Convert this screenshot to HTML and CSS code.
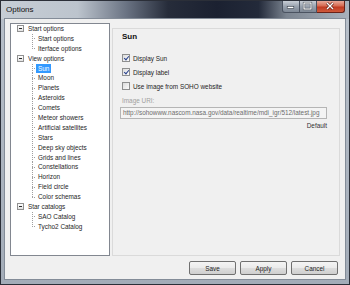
FILE: index.html
```html
<!DOCTYPE html>
<html lang="en">
<head>
  <meta charset="UTF-8">
  <title>Options</title>
  <link rel="stylesheet" href="styles.css">
</head>
<body>
  <div class="window">
    <div class="titlebar">
      <span class="title">Options</span>
      <div class="caption-buttons">
        <span class="cap cap-min">
          <svg width="18" height="12" viewBox="0 0 18 12"><rect x="5.5" y="6.5" width="7" height="2" fill="#fff" stroke="#333a44" stroke-width="0.6"/></svg>
        </span>
        <span class="cap cap-max">
          <svg width="17" height="12" viewBox="0 0 17 12"><rect x="5" y="3" width="7" height="6" fill="none" stroke="#333a44" stroke-width="2.2"/><rect x="5" y="3" width="7" height="6" fill="none" stroke="#fff" stroke-width="1.2"/></svg>
        </span>
        <span class="cap cap-close">
          <svg width="28" height="12" viewBox="0 0 28 12"><path d="M11 3l6 6M17 3l-6 6" stroke="#5a1a12" stroke-width="2.6"/><path d="M11 3l6 6M17 3l-6 6" stroke="#fff" stroke-width="1.4"/></svg>
        </span>
      </div>
    </div>

    <div class="client">
      <div class="main">
        <div class="tree">
          <div class="root-row"><span class="expander"></span><span class="label">Start options</span></div>
          <div class="child"><span class="guide"></span><span class="label">Start options</span></div>
          <div class="child last"><span class="guide"></span><span class="label">Iterface options</span></div>

          <div class="root-row"><span class="expander"></span><span class="label">View options</span></div>
          <div class="child"><span class="guide"></span><span class="label selected">Sun</span></div>
          <div class="child"><span class="guide"></span><span class="label">Moon</span></div>
          <div class="child"><span class="guide"></span><span class="label">Planets</span></div>
          <div class="child"><span class="guide"></span><span class="label">Asteroids</span></div>
          <div class="child"><span class="guide"></span><span class="label">Comets</span></div>
          <div class="child"><span class="guide"></span><span class="label">Meteor showers</span></div>
          <div class="child"><span class="guide"></span><span class="label">Artificial satellites</span></div>
          <div class="child"><span class="guide"></span><span class="label">Stars</span></div>
          <div class="child"><span class="guide"></span><span class="label">Deep sky objects</span></div>
          <div class="child"><span class="guide"></span><span class="label">Grids and lines</span></div>
          <div class="child"><span class="guide"></span><span class="label">Constellations</span></div>
          <div class="child"><span class="guide"></span><span class="label">Horizon</span></div>
          <div class="child"><span class="guide"></span><span class="label">Field circle</span></div>
          <div class="child last"><span class="guide"></span><span class="label">Color schemas</span></div>

          <div class="root-row"><span class="expander"></span><span class="label">Star catalogs</span></div>
          <div class="child"><span class="guide"></span><span class="label">SAO Catalog</span></div>
          <div class="child last"><span class="guide"></span><span class="label">Tycho2 Catalog</span></div>
        </div>

        <div class="panel">
          <h2 class="panel-title">Sun</h2>
          <label class="check-row first">
            <span class="checkbox checked"></span>
            <span>Display Sun</span>
          </label>
          <label class="check-row">
            <span class="checkbox checked"></span>
            <span>Display label</span>
          </label>
          <label class="check-row">
            <span class="checkbox"></span>
            <span>Use image from SOHO website</span>
          </label>
          <div class="field-label">Image URI:</div>
          <div class="textbox">http://sohowww.nascom.nasa.gov/data/realtime/mdi_igr/512/latest.jpg</div>
          <div class="default-link">Default</div>
        </div>
      </div>

      <div class="buttons">
        <button class="btn">Save</button>
        <button class="btn">Apply</button>
        <button class="btn">Cancel</button>
      </div>
    </div>
  </div>
</body>
</html>
```

FILE: styles.css
```css
body {
    margin: 0;
    padding: 0;
    font-family: 'Liberation Sans', Arial, sans-serif;
    font-size: 6.4px;
    color: #1e1e1e;
    background: #2a2e36;
}

.window {
    width: 350px;
    height: 285px;
    box-sizing: border-box;
    border: 1px solid #2b2f38;
    padding: 0 4px 5px 4px;
    display: flex;
    flex-direction: column;
    background: linear-gradient(to bottom, #b8c0ca, #a3acb8);
}

/* title bar */

.titlebar {
    height: 18px;
    display: flex;
    align-items: flex-start;
    margin: 0 -4px;
    padding: 0 4px;
    background: linear-gradient(to right, #c6cdd5 0, #bcc4cd 22%, #6a7383 36%, #262c3a 48%, #1b2131 62%, #232a3a 74%, #7b8490 82%, #a9b2bd 100%);
}

.title {
    font-size: 8px;
    line-height: 18px;
    color: #111;
    padding-left: 1px;
}

.caption-buttons {
    margin-left: auto;
    display: flex;
}

.cap {
    height: 12px;
    display: flex;
    border: 1px solid #4b5361;
    border-top: none;
    box-sizing: border-box;
    overflow: hidden;
}

.cap svg {
    display: block;
    margin: -1px 0 0 -1px;
}

.cap-min {
    width: 18px;
    border-radius: 0 0 0 3px;
    background: linear-gradient(to bottom, #c8ced6, #99a2ae 50%, #7d8795);
}

.cap-max {
    width: 17px;
    border-left: none;
    background: linear-gradient(to bottom, #c8ced6, #99a2ae 50%, #7d8795);
}

.cap-close {
    width: 28px;
    border-left: none;
    border-color: #6b2218;
    border-radius: 0 0 3px 0;
    background: linear-gradient(to bottom, #e8a899, #d56a52 45%, #c03a22 55%, #cf5a3c);
}

/* client area */

.client {
    flex: 1;
    background-color: #f0f0f0;
    box-shadow: 0 0 0 1px #838c98;
    padding: 4px 5px 4px 5px;
    display: flex;
    flex-direction: column;
}

.main {
    height: 233px;
    display: flex;
    gap: 2px;
}

/* tree */

.tree {
    width: 100px;
    box-sizing: border-box;
    border: 1px solid #828790;
    background: white;
    line-height: 9.9px;
}

.root-row,
.child {
    display: flex;
    align-items: center;
    height: 9.9px;
    white-space: nowrap;
}

.root-row {
    padding-left: 6px;
}

.child {
    padding-left: 21px;
    align-items: stretch;
}

.expander {
    width: 7px;
    height: 7px;
    box-sizing: border-box;
    border: 1px solid #919191;
    background: linear-gradient(to bottom, #ffffff, #e2e2e2);
    margin-right: 2px;
    display: flex;
    align-items: center;
    justify-content: center;
}

.expander::after {
    content: "";
    width: 3px;
    height: 1px;
    background: #2b2b2b;
}

.guide {
    width: 4px;
    flex: none;
    background-image:
        repeating-linear-gradient(to bottom, #a0a0a0 0 1px, transparent 1px 2px),
        repeating-linear-gradient(to right, #a0a0a0 0 1px, transparent 1px 2px);
    background-repeat: no-repeat;
    background-size: 1px 100%, 100% 1px;
    background-position: 0 0, 0 50%;
}

.child.last .guide {
    background-size: 1px 50%, 100% 1px;
}

.label {
    padding: 0 2px;
    display: flex;
    align-items: center;
}

.label.selected {
    background-color: #3399ff;
    color: white;
}

/* settings panel */

.panel {
    flex: 1;
    margin-top: 5px;
    border: 1px solid #dadada;
    padding: 3px 12px 0 9px;
}

.panel-title {
    font-size: 8px;
    font-weight: bold;
    line-height: 10px;
    margin: 0 0 9px 0;
    color: #111;
}

.check-row {
    display: flex;
    align-items: center;
    height: 14px;
    gap: 3px;
}

.checkbox {
    width: 8px;
    height: 8px;
    box-sizing: border-box;
    border: 1px solid #8e8f8f;
    background: linear-gradient(135deg, #dcdcdc, #fbfbfb);
    position: relative;
}

.checkbox.checked::after {
    content: "";
    position: absolute;
    left: 1.5px;
    top: -0.5px;
    width: 2px;
    height: 4px;
    border: solid #27408b;
    border-width: 0 1.3px 1.3px 0;
    transform: rotate(40deg);
}

.field-label {
    color: #a0a0a0;
    line-height: 10px;
    margin-top: 3px;
}

.textbox {
    margin: 1px 0 0 -2px;
    height: 12px;
    box-sizing: border-box;
    border: 1px solid #b5b5b5;
    background: #f4f4f4;
    color: #6d6d6d;
    line-height: 10px;
    padding: 0 2px;
    white-space: nowrap;
    overflow: hidden;
}

.default-link {
    text-align: right;
    line-height: 10px;
    margin-top: 2px;
    color: #333;
}

/* buttons */

.buttons {
    display: flex;
    justify-content: flex-end;
    gap: 4px;
    margin-top: 5px;
    padding-right: 2px;
}

.btn {
    width: 47px;
    height: 14px;
    padding: 0;
    font-family: inherit;
    font-size: 6.4px;
    color: #1e1e1e;
    border: 1px solid #707070;
    border-radius: 2px;
    background: linear-gradient(to bottom, #f4f4f4 0, #ebebeb 48%, #dddddd 52%, #cfcfcf 100%);
}
```
